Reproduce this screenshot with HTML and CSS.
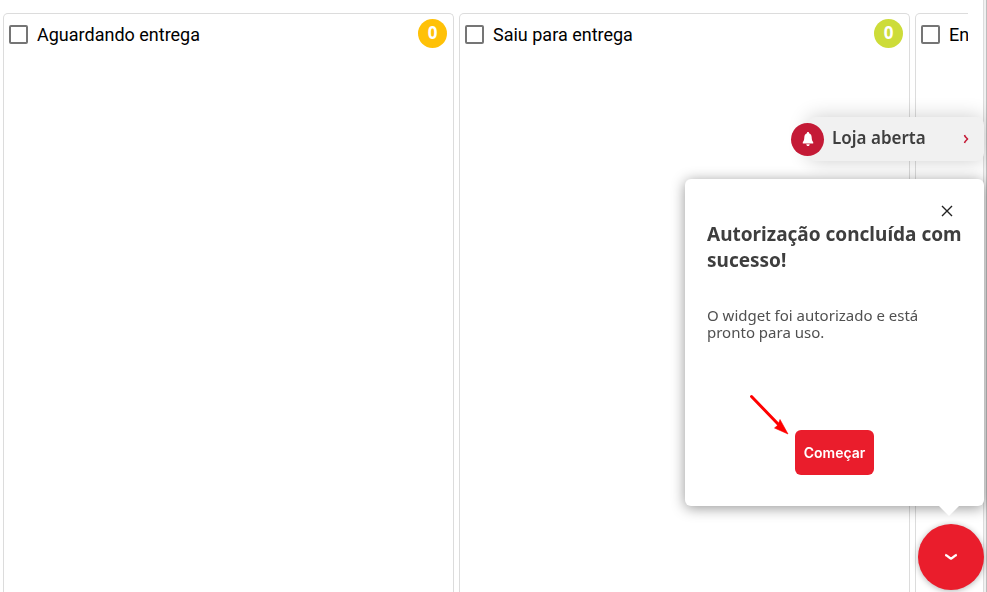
FILE: index.html
```html
<!DOCTYPE html>
<html lang="pt-BR">
<head>
  <meta charset="UTF-8" />
  <meta name="viewport" content="width=device-width, initial-scale=1.0"/>
  <title>Pedidos</title>
  <link rel="stylesheet" href="styles.css">
</head>
<body>
  <div class="page">
    <main class="board">
      <section class="column">
        <label class="column-title"><input type="checkbox"> Aguardando entrega</label>
        <span class="count count-waiting">0</span>
      </section>
      <section class="column">
        <label class="column-title"><input type="checkbox"> Saiu para entrega</label>
        <span class="count count-sent">0</span>
      </section>
      <section class="column">
        <label class="column-title"><input type="checkbox"> En</label>
      </section>
    </main>
    <div class="gutter"></div>
  </div>

  <aside class="widget">
    <button class="store-status">
      <span class="bell">
        <svg width="12" height="16" viewBox="0 0 12 16" fill="#fff">
          <path d="M6 1c.7 0 1.100.5 1.100 1.200C8.900 2.800 9.600 4.400 9.700 6.500c.1 2.200.5 3.500 1.500 4.600V12.500H.8V11.100C1.800 10 2.200 8.700 2.300 6.500 2.400 4.400 3.100 2.800 4.900 2.200 4.900 1.500 5.300 1 6 1z"/>
          <path d="M4.300 13.200h3.400C7.600 14.300 7 15 6 15s-1.600-.7-1.700-1.800z"/>
        </svg>
      </span>
      <span class="store-label">Loja aberta</span>
      <svg width="6" height="10" viewBox="0 0 6 10" fill="none" stroke="#c41a36" stroke-width="1.500">
        <path d="M1.500 1c.3 1.700 1.700 2.600 3 4C3.200 6.400 1.800 7.300 1.500 9"/>
      </svg>
    </button>

    <div class="popup">
      <button class="close" aria-label="Fechar">
        <svg width="12" height="12" viewBox="0 0 12 12" stroke="#222" stroke-width="1.400">
          <path d="M1 1l10 10M11 1L1 11"/>
        </svg>
      </button>
      <h2>Autorização concluída com sucesso!</h2>
      <p>O widget foi autorizado e está pronto para uso.</p>
      <button class="start">Começar</button>
      <svg class="arrow" width="40" height="42" viewBox="0 0 40 42">
        <path d="M2.500 2.500L30 31" stroke="#f00" stroke-width="3" stroke-linecap="round"/>
        <path d="M39 40L25.500 34 29 31 31 25.500z" fill="#f00" stroke="#f00" stroke-width="0.600"/>
      </svg>
    </div>

    <button class="toggle" aria-label="Minimizar">
      <svg width="14" height="8" viewBox="0 0 14 8" fill="none" stroke="#fff" stroke-width="2.400">
        <path d="M1.200 1.800C3.500 2.300 5 4.800 7 5.500 9 4.800 10.500 2.300 12.800 1.800"/>
      </svg>
    </button>
  </aside>
</body>
</html>
```
FILE: styles.css
```css
* {
  box-sizing: border-box;
}
body {
  margin: 0;
  font-family: Roboto, sans-serif;
  background: #fff;
}
button {
  border: 0;
  padding: 0;
  font-family: "Noto Sans", sans-serif;
  cursor: pointer;
}
.page {
  display: flex;
  height: 100vh;
  overflow: hidden;
}
.board {
  flex: 1;
  display: flex;
  gap: 5px;
  margin-right: 15px;
  padding: 13px 0 0 3px;
  overflow: hidden;
}
.column {
  flex: 0 0 451px;
  display: flex;
  justify-content: space-between;
  align-items: flex-start;
  padding: 5px 6px 0 5px;
  border: 1px solid #dcdcdc;
  border-bottom: 0;
  border-radius: 5px 5px 0 0;
}
.column-title {
  display: flex;
  align-items: center;
  gap: 9px;
  height: 30px;
  font-size: 18px;
  color: #000;
  white-space: nowrap;
}
.column-title input {
  appearance: none;
  width: 19px;
  height: 19px;
  margin: 0;
  border: 2px solid #757575;
  border-radius: 2px;
}
.count {
  width: 29px;
  height: 29px;
  border-radius: 50%;
  color: #fff;
  font: bold 17px/27px "Open Sans", sans-serif;
  text-align: center;
}
.count-waiting {
  background: #ffc107;
}
.count-sent {
  background: #cddc39;
}
.gutter {
  width: 4px;
  background: #f0f0f0;
  border-left: 1px solid #dcdcdc;
  border-right: 1px solid #bdbdbd;
}

/* chat widget */
.widget {
  position: fixed;
  right: 3px;
  bottom: 2px;
  width: 299px;
  display: flex;
  flex-direction: column;
  align-items: flex-end;
  gap: 18px;
}
.store-status {
  display: flex;
  align-items: center;
  width: 176px;
  height: 44px;
  padding-right: 15px;
  border-radius: 8px;
  background: #f1f1f1;
  box-shadow: 0 0 20px rgba(0, 0, 0, 0.2);
}
.bell {
  display: flex;
  align-items: center;
  justify-content: center;
  width: 33px;
  height: 33px;
  margin: 0 8px 0 -17px;
  border-radius: 50%;
  background: #c41a36;
}
.store-label {
  flex: 1;
  font-size: 17px;
  line-height: 24px;
  padding-bottom: 2px;
  font-weight: 600;
  text-align: left;
  color: #3e3e3e;
}
.popup {
  position: relative;
  display: flex;
  flex-direction: column;
  width: 100%;
  padding: 26px 22px 31px;
  border-radius: 6px;
  background: #fff;
  box-shadow: 0 2px 14px rgba(0, 0, 0, 0.42);
  font-family: "Noto Sans", sans-serif;
  color: #3e3e3e;
}
.popup::after {
  content: "";
  position: absolute;
  top: 100%;
  right: 25px;
  border: 10px solid transparent;
  border-top-color: #fff;
  border-bottom: 0;
}
.close {
  display: flex;
  align-self: flex-end;
  margin-right: 9px;
  background: none;
}
.popup h2 {
  margin: 4px -8px 34px 0;
  font-size: 19px;
  line-height: 26px;
  font-weight: 700;
}
.popup p {
  margin: 0 0 89px;
  font-size: 15px;
  line-height: 17px;
  color: #505050;
}
.start {
  align-self: center;
  width: 79px;
  height: 45px;
  border-radius: 6px;
  background: #ea1d2c;
  color: #fff;
  font: 600 14px Inter, sans-serif;
}
.arrow {
  position: absolute;
  left: 64px;
  bottom: 70px;
}
.toggle {
  display: flex;
  align-items: center;
  justify-content: center;
  width: 66px;
  height: 66px;
  border-radius: 50%;
  background: #ea1d2c;
  box-shadow: 0 1px 6px rgba(0, 0, 0, 0.3);
}
```
